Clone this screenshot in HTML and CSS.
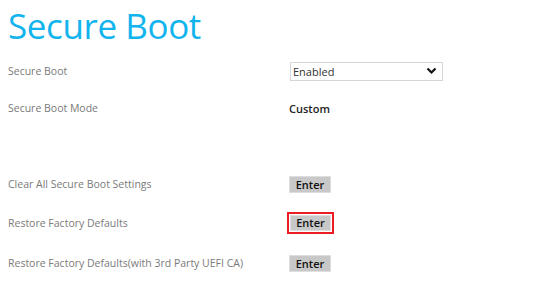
FILE: index.html
```html
<!DOCTYPE html>
<html>
<head>
<meta charset="utf-8">
<link rel="stylesheet" href="styles.css">
</head>
<body>
<div class="page">
  <h1 class="title">Secure Boot</h1>
  <div class="row r1">
    <div class="label">Secure Boot</div>
    <div class="value">
      <div class="select">
        <span>Enabled</span>
        <svg class="chev" width="11" height="8" viewBox="0 0 11 8"><polyline points="1.5,1.5 5.5,5.5 9.5,1.5" fill="none" stroke="#111" stroke-width="2.2"/></svg>
      </div>
    </div>
  </div>
  <div class="row r2">
    <div class="label">Secure Boot Mode</div>
    <div class="value"><span class="strong">Custom</span></div>
  </div>
  <div class="spacer"></div>
  <div class="row r3">
    <div class="label">Clear All Secure Boot Settings</div>
    <div class="value"><button class="btn">Enter</button></div>
  </div>
  <div class="row r4">
    <div class="label">Restore Factory Defaults</div>
    <div class="value"><span class="focus"><button class="btn">Enter</button></span></div>
  </div>
  <div class="row r5">
    <div class="label">Restore Factory Defaults(with 3rd Party UEFI CA)</div>
    <div class="value"><button class="btn">Enter</button></div>
  </div>
</div>
</body>
</html>
```
FILE: styles.css
```css
* { box-sizing: border-box; }
html, body { margin: 0; padding: 0; background: #fff; }
body { font-family: "Open Sans", "Noto Sans", sans-serif; width: 550px; height: 296px; overflow: hidden; }
.page { padding-left: 8px; }
.title {
  margin: 0;
  height: 52px;
  font-weight: 400;
  font-size: 35px;
  line-height: 52px;
  color: #12b4ee;
  letter-spacing: -0.4px;
}
.row { display: flex; align-items: center; }
.r1 { height: 38px; }
.r2 { height: 36px; }
.spacer { height: 39px; }
.r3 { height: 38px; }
.r4 { height: 40px; }
.r5 { height: 40px; }
.label { width: 281px; font-size: 10.5px; color: #7a7a7a; }
.value { display: flex; align-items: center; }
.select {
  width: 153px; height: 19px;
  border: 1px solid #d6d6d6;
  display: flex; align-items: center; justify-content: space-between;
  padding: 0 5px 0 2px;
  font-size: 11px; color: #333;
  margin-left: 1px;
}
.chev { display: block; }
.strong { font-size: 11px; font-weight: 600; color: #222; }
.btn {
  font-family: inherit;
  width: 42px; height: 17px;
  padding: 0; margin: 0;
  background: #c8c8c8;
  border: 1px solid #dedede;
  font-size: 11px; font-weight: 600; color: #111;
  line-height: 15px;
}
.focus {
  display: flex;
  border: 2px solid #ea1c24;
  padding: 1px;
  margin-left: -2px;
}
.focus .btn { width: 41px; height: 16px; line-height: 14px; }
```
